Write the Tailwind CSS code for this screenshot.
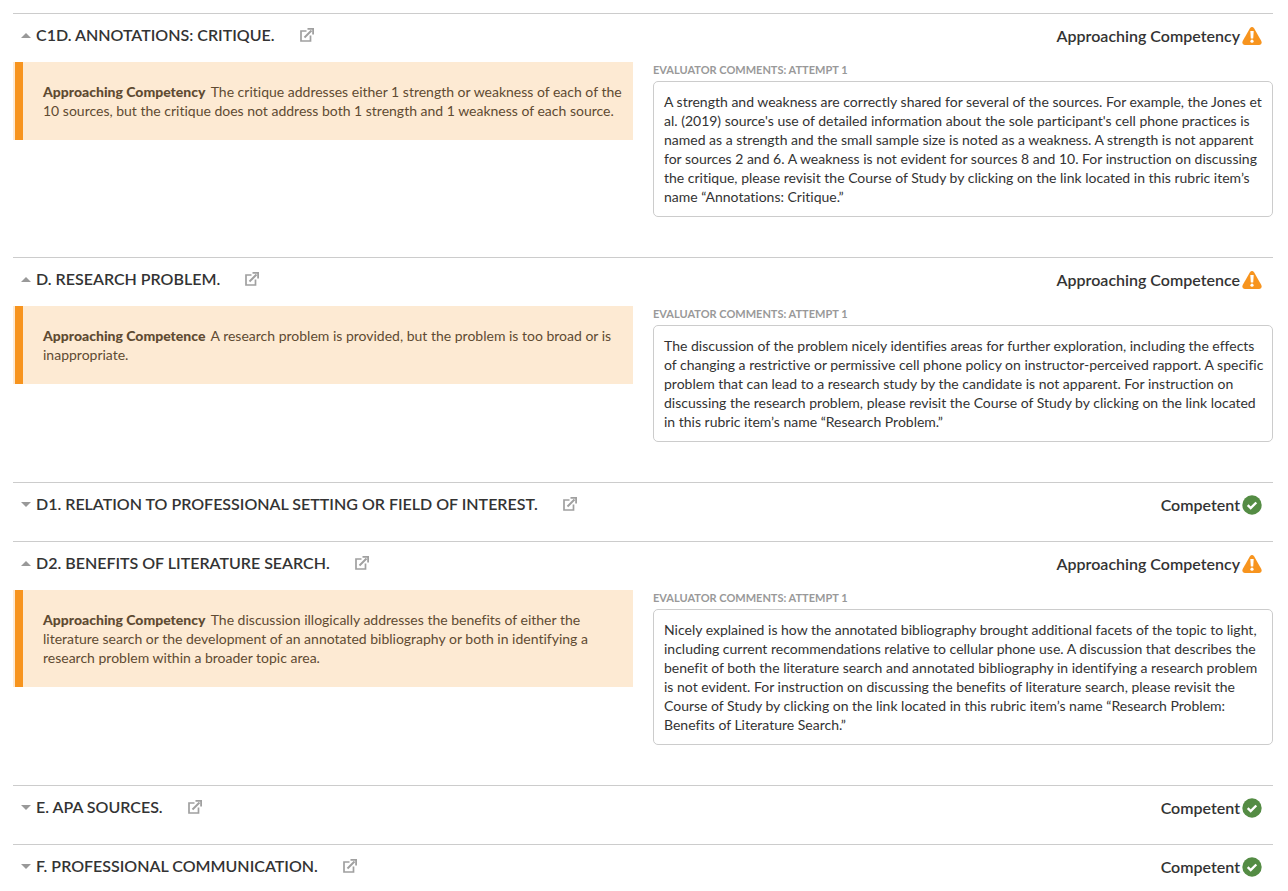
<!DOCTYPE html>
<html lang="en">
<head>
    <meta charset="UTF-8">
    <meta name="viewport" content="width=device-width, initial-scale=1.0">
    <title>Evaluation Report</title>
    <script src="https://cdn.jsdelivr.net/npm/@tailwindcss/browser@4"></script>
</head>
<body class="bg-white font-[Lato,sans-serif] text-[14px] leading-[19px] text-[#333333] [font-variant-ligatures:none]">
    <!-- Shared icons -->
    <svg class="hidden" aria-hidden="true">
        <symbol id="icon-up" viewBox="0 0 10 5"><path d="M5 0L10 5H0z" fill="#999999"/></symbol>
        <symbol id="icon-down" viewBox="0 0 10 5"><path d="M0 0h10L5 5z" fill="#999999"/></symbol>
        <symbol id="icon-open" viewBox="0 0 14 14">
            <path d="M6.5 3H1v10h9.500V7.500" fill="none" stroke="#a0a0a0" stroke-width="1.700"/>
            <path d="M4.500 9.500L11.500 2.500" fill="none" stroke="#a0a0a0" stroke-width="2"/>
            <path d="M7.500 .9h5.600v5.600" fill="none" stroke="#a0a0a0" stroke-width="1.800"/>
        </symbol>
        <symbol id="icon-warning" viewBox="0 0 20 18">
            <path d="M7.800 1.400Q10-1.200 12.200 1.400L19.300 14Q20.600 17.800 17.300 18H2.700Q-.6 17.800.7 14z" fill="#f7941e"/>
            <path d="M8.300 4h3.400l-.5 7.500H8.800z" fill="#ffffff"/>
            <circle cx="10" cy="14.200" r="1.600" fill="#ffffff"/>
        </symbol>
        <symbol id="icon-check" viewBox="0 0 20 20">
            <circle cx="10" cy="10" r="9.700" fill="#548c44"/>
            <path d="M5.700 10.200l3 2.900 5.600-5.600" fill="none" stroke="#ffffff" stroke-width="2.400"/>
        </symbol>
    </svg>

    <main class="pt-[13px] pr-[15px] pl-[13px]">
        <!-- C1D -->
        <section class="border-t border-[#cccccc] pb-10">
            <div class="mb-1 flex h-11 items-center justify-between pr-[11px] pl-2 text-[16px] leading-6 font-semibold">
                <h2 class="flex items-center pb-[2px]">
                    <button type="button" aria-expanded="true" class="flex items-center gap-[5px]">
                        <svg class="h-[5px] w-[10px]"><use href="#icon-up"/></svg>
                        C1D. ANNOTATIONS: CRITIQUE.
                    </button>
                    <a href="#" aria-label="Open Course of Study" class="ml-[25px]"><svg class="size-[14px]"><use href="#icon-open"/></svg></a>
                </h2>
                <p class="flex items-center gap-[2px]">Approaching Competency <svg class="h-[18px] w-[20px]"><use href="#icon-warning"/></svg></p>
            </div>
            <div class="grid grid-cols-2 items-start gap-5">
                <div class="flex bg-[#fdead3] pl-[2px]">
                    <div class="w-2 shrink-0 bg-[#f7941e]"></div>
                    <p class="py-5 pr-1 pl-5 text-[#5f4b32]"><strong class="mr-[2px] font-black">Approaching Competency</strong> The critique addresses either 1 strength or weakness of each of the 10 sources, but the critique does not address both 1 strength and 1 weakness of each source.</p>
                </div>
                <div>
                    <h3 class="mb-1 text-[11px] leading-[15px] font-bold text-[#999999]">EVALUATOR COMMENTS: ATTEMPT 1</h3>
                    <p class="rounded-[5px] border border-[#cccccc] py-[10px] pr-1 pl-[10px]">A strength and weakness are correctly shared for several of the sources. For example, the Jones et al. (2019) source's use of detailed information about the sole participant's cell phone practices is named as a strength and the small sample size is noted as a weakness. A strength is not apparent for sources 2 and 6. A weakness is not evident for sources 8 and 10. For instruction on discussing the critique, please revisit the Course of Study by clicking on the link located in this rubric item’s name “Annotations: Critique.”</p>
                </div>
            </div>
        </section>

        <!-- D -->
        <section class="border-t border-[#cccccc] pb-10">
            <div class="mb-1 flex h-11 items-center justify-between pr-[11px] pl-2 text-[16px] leading-6 font-semibold">
                <h2 class="flex items-center pb-[2px]">
                    <button type="button" aria-expanded="true" class="flex items-center gap-[5px]">
                        <svg class="h-[5px] w-[10px]"><use href="#icon-up"/></svg>
                        D. RESEARCH PROBLEM.
                    </button>
                    <a href="#" aria-label="Open Course of Study" class="ml-[25px]"><svg class="size-[14px]"><use href="#icon-open"/></svg></a>
                </h2>
                <p class="flex items-center gap-[2px]">Approaching Competence <svg class="h-[18px] w-[20px]"><use href="#icon-warning"/></svg></p>
            </div>
            <div class="grid grid-cols-2 items-start gap-5">
                <div class="flex bg-[#fdead3] pl-[2px]">
                    <div class="w-2 shrink-0 bg-[#f7941e]"></div>
                    <p class="py-5 pr-1 pl-5 text-[#5f4b32]"><strong class="mr-[2px] font-black">Approaching Competence</strong> A research problem is provided, but the problem is too broad or is inappropriate.</p>
                </div>
                <div>
                    <h3 class="mb-1 text-[11px] leading-[15px] font-bold text-[#999999]">EVALUATOR COMMENTS: ATTEMPT 1</h3>
                    <p class="rounded-[5px] border border-[#cccccc] py-[10px] pr-1 pl-[10px]">The discussion of the problem nicely identifies areas for further exploration, including the effects of changing a restrictive or permissive cell phone policy on instructor-perceived rapport. A specific problem that can lead to a research study by the candidate is not apparent. For instruction on discussing the research problem, please revisit the Course of Study by clicking on the link located in this rubric item’s name “Research Problem.”</p>
                </div>
            </div>
        </section>

        <!-- D1 -->
        <section class="border-t border-[#cccccc] pb-[14px]">
            <div class="flex h-11 items-center justify-between pr-[11px] pl-2 text-[16px] leading-6 font-semibold">
                <h2 class="flex items-center pb-[2px]">
                    <button type="button" aria-expanded="false" class="flex items-center gap-[5px]">
                        <svg class="h-[5px] w-[10px]"><use href="#icon-down"/></svg>
                        D1. RELATION TO PROFESSIONAL SETTING OR FIELD OF INTEREST.
                    </button>
                    <a href="#" aria-label="Open Course of Study" class="ml-[25px]"><svg class="size-[14px]"><use href="#icon-open"/></svg></a>
                </h2>
                <p class="flex items-center gap-[2px]">Competent <svg class="size-[20px]"><use href="#icon-check"/></svg></p>
            </div>
        </section>

        <!-- D2 -->
        <section class="border-t border-[#cccccc] pb-10">
            <div class="mb-1 flex h-11 items-center justify-between pr-[11px] pl-2 text-[16px] leading-6 font-semibold">
                <h2 class="flex items-center pb-[2px]">
                    <button type="button" aria-expanded="true" class="flex items-center gap-[5px]">
                        <svg class="h-[5px] w-[10px]"><use href="#icon-up"/></svg>
                        D2. BENEFITS OF LITERATURE SEARCH.
                    </button>
                    <a href="#" aria-label="Open Course of Study" class="ml-[25px]"><svg class="size-[14px]"><use href="#icon-open"/></svg></a>
                </h2>
                <p class="flex items-center gap-[2px]">Approaching Competency <svg class="h-[18px] w-[20px]"><use href="#icon-warning"/></svg></p>
            </div>
            <div class="grid grid-cols-2 items-start gap-5">
                <div class="flex bg-[#fdead3] pl-[2px]">
                    <div class="w-2 shrink-0 bg-[#f7941e]"></div>
                    <p class="py-5 pr-1 pl-5 text-[#5f4b32]"><strong class="mr-[2px] font-black">Approaching Competency</strong> The discussion illogically addresses the benefits of either the literature search or the development of an annotated bibliography or both in identifying a research problem within a broader topic area.</p>
                </div>
                <div>
                    <h3 class="mb-1 text-[11px] leading-[15px] font-bold text-[#999999]">EVALUATOR COMMENTS: ATTEMPT 1</h3>
                    <p class="rounded-[5px] border border-[#cccccc] py-[10px] pr-1 pl-[10px]">Nicely explained is how the annotated bibliography brought additional facets of the topic to light, including current recommendations relative to cellular phone use. A discussion that describes the benefit of both the literature search and annotated bibliography in identifying a research problem is not evident. For instruction on discussing the benefits of literature search, please revisit the Course of Study by clicking on the link located in this rubric item’s name “Research Problem: Benefits of Literature Search.”</p>
                </div>
            </div>
        </section>

        <!-- E -->
        <section class="border-t border-[#cccccc] pb-[14px]">
            <div class="flex h-11 items-center justify-between pr-[11px] pl-2 text-[16px] leading-6 font-semibold">
                <h2 class="flex items-center pb-[2px]">
                    <button type="button" aria-expanded="false" class="flex items-center gap-[5px]">
                        <svg class="h-[5px] w-[10px]"><use href="#icon-down"/></svg>
                        E. APA SOURCES.
                    </button>
                    <a href="#" aria-label="Open Course of Study" class="ml-[25px]"><svg class="size-[14px]"><use href="#icon-open"/></svg></a>
                </h2>
                <p class="flex items-center gap-[2px]">Competent <svg class="size-[20px]"><use href="#icon-check"/></svg></p>
            </div>
        </section>

        <!-- F -->
        <section class="border-t border-[#cccccc]">
            <div class="flex h-11 items-center justify-between pr-[11px] pl-2 text-[16px] leading-6 font-semibold">
                <h2 class="flex items-center pb-[2px]">
                    <button type="button" aria-expanded="false" class="flex items-center gap-[5px]">
                        <svg class="h-[5px] w-[10px]"><use href="#icon-down"/></svg>
                        F. PROFESSIONAL COMMUNICATION.
                    </button>
                    <a href="#" aria-label="Open Course of Study" class="ml-[25px]"><svg class="size-[14px]"><use href="#icon-open"/></svg></a>
                </h2>
                <p class="flex items-center gap-[2px]">Competent <svg class="size-[20px]"><use href="#icon-check"/></svg></p>
            </div>
        </section>
    </main>
</body>
</html>
